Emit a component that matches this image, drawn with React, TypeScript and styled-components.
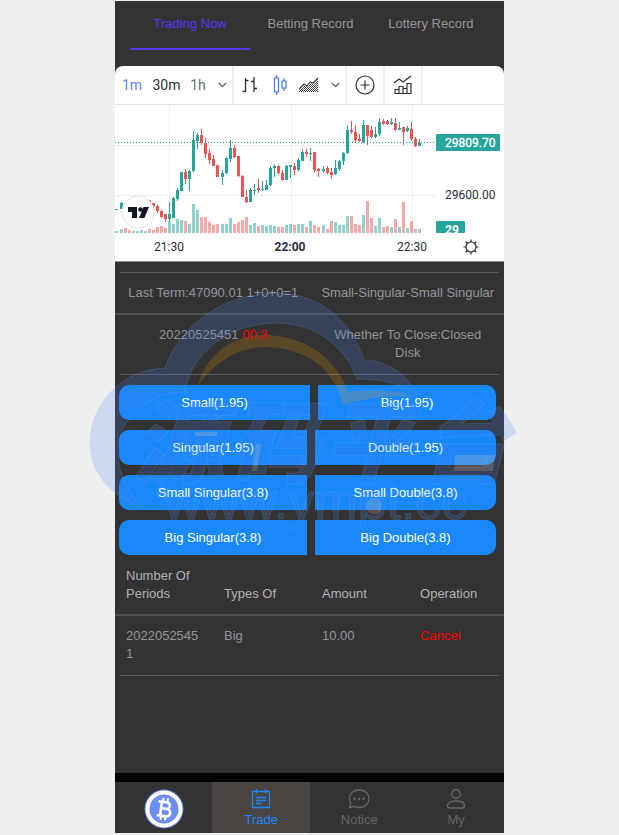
import React from "react";
import styled, { createGlobalStyle } from "styled-components";

const GlobalStyle = createGlobalStyle`
  *, *::before, *::after { box-sizing: border-box; }
  body {
    margin: 0;
    background: #efefef;
    font-family: "Liberation Sans", Arial, sans-serif;
    font-size: 13px;
    line-height: 18px;
  }
  button { font: inherit; border: 0; padding: 0; background: none; cursor: pointer; }
`;

const Shell = styled.div`
  position: relative;
  display: flex;
  flex-direction: column;
  width: 100%;
  max-width: 389px;
  min-height: 100vh;
  margin: 0 auto;
  padding: 1px 0 2px;
`;

const Main = styled.main`
  flex: 1;
  background: #333;
  color: #96939b;
`;

const Tabs = styled.nav`
  display: flex;
  padding: 0 13px 0 15px;
  height: 65px;
`;

const Tab = styled.button<{ $active?: boolean }>`
  flex: 1;
  height: 49px;
  padding-bottom: 2px;
  color: ${(p) => (p.$active ? "#5b35f5" : "#96939b")};
  border-bottom: 2px solid ${(p) => (p.$active ? "#5b35f5" : "transparent")};
`;

const ChartPanel = styled.section`
  position: relative;
  background: #fff;
  border-radius: 8px 8px 0 0;
  border-bottom: 1px solid #8b8f8e;
  overflow: hidden;
  font-family: Roboto, sans-serif;
`;

const Toolbar = styled.div`
  display: flex;
  height: 39px;
  border-bottom: 1px solid #e0e3eb;
`;

const ToolGroup = styled.div`
  display: flex;
  border-right: 2px solid #eceef4;
`;

const Tool = styled.button<{ $width: number; $color?: string }>`
  display: flex;
  align-items: center;
  justify-content: center;
  width: ${(p) => p.$width}px;
  font-size: 14px;
  color: ${(p) => p.$color ?? "#50535e"};
`;

const Plot = styled.svg`
  display: block;
  width: 100%;
  height: auto;
`;

const SettingsButton = styled.button`
  position: absolute;
  right: 24px;
  bottom: 4px;
  width: 18px;
  height: 18px;
  color: #2a2e39;
`;

const Divider = styled.hr`
  height: 2px;
  margin: 0 5px;
  border: 0;
  border-bottom: 1px solid #5b5a61;
`;

const InfoWrap = styled.section`
  padding-top: 9px;
`;

const InfoRow = styled.div<{ $line?: boolean }>`
  display: grid;
  grid-template-columns: 1fr 1fr;
  border-bottom: ${(p) => (p.$line ? "2px solid #4f4e55" : "0")};
`;

const InfoCell = styled.div`
  padding: 11px 9px 11px 11px;
  text-align: center;
`;

const Countdown = styled.span`
  position: relative;
  z-index: 1;
  color: #f00;
`;

const Bets = styled.div`
  display: flex;
  flex-direction: column;
  gap: 10px;
  padding: 10px 8px 10px 4px;
`;

const BetRow = styled.div`
  display: flex;
  gap: 8px;
`;

const BetButton = styled.button<{ $side: "left" | "right"; $share: number }>`
  flex: ${(p) => p.$share} 1 0;
  height: 35px;
  color: #fff;
  background: #1989fa;
  border-radius: ${(p) => (p.$side === "left" ? "10px 0 0 10px" : "0 10px 10px 0")};
`;

const Orders = styled.table`
  width: 100%;
  table-layout: fixed;
  border-collapse: collapse;
`;

const Head = styled.th`
  width: 25.2%;
  padding: 2px 11px 11px;
  text-align: left;
  vertical-align: bottom;
  font-weight: 400;
  color: #b2b2b5;
  border-bottom: 2px solid #4f4e55;

  &:last-child { width: auto; }
`;

const Cell = styled.td`
  padding: 11px;
  vertical-align: top;
  word-break: break-all;
`;

const CancelButton = styled.button`
  color: #f00;
`;

const Footer = styled.nav`
  display: grid;
  grid-template-columns: 25% 25.2% 25.2% 1fr;
  border-top: 9px solid #000;
  background: #333;
`;

const FooterLink = styled.a<{ $active?: boolean }>`
  display: flex;
  flex-direction: column;
  align-items: center;
  justify-content: center;
  gap: 2px;
  height: 51px;
  padding-top: 2px;
  text-decoration: none;
  color: ${(p) => (p.$active ? "#1989fa" : "#66666a")};
  background: ${(p) => (p.$active ? "#4a4443" : "transparent")};
`;

const Watermark = styled.svg`
  position: absolute;
  left: -30px;
  top: 288px;
  width: 440px;
  height: 250px;
  pointer-events: none;
`;

const UP = "#26a69a";
const DOWN = "#ef5350";
const FIRST_SLOT = -13;

// direction, body top, body bottom, wick high, wick low, volume
type Candle = [1 | 0, number, number, number, number, number];
const candles: Candle[] = [
  [1, 209, 210, 209, 210, 2], [1, 203, 209, 202, 209, 4], [0, 203, 205, 202, 206, 5],
  [0, 205, 208, 204, 210, 3], [1, 205, 208, 204, 209, 2], [1, 203, 206, 202, 207, 2],
  [1, 202, 204, 201, 206, 3], [1, 201, 203, 200, 204, 2], [0, 200, 203, 200, 204, 4],
  [0, 203, 206, 203, 208, 3], [0, 206, 211, 205, 213, 6], [0, 211, 217, 210, 218, 7],
  [0, 214, 219, 214, 222, 5], [1, 214, 219, 202, 222, 12], [1, 198, 218, 197, 218, 9],
  [1, 190, 199, 188, 201, 14], [1, 172, 191, 172, 191, 13], [0, 172, 179, 169, 184, 12],
  [1, 171, 179, 170, 191, 9], [1, 140, 171, 131, 172, 29], [1, 135, 141, 133, 149, 23],
  [0, 135, 143, 129, 145, 16], [0, 143, 154, 138, 158, 16], [0, 153, 160, 149, 164, 11],
  [0, 159, 166, 155, 166, 8], [0, 165, 177, 165, 177, 9], [1, 173, 177, 170, 185, 9],
  [1, 158, 173, 157, 174, 9], [1, 148, 159, 140, 162, 15], [0, 148, 157, 145, 158, 9],
  [0, 156, 176, 156, 177, 11], [0, 176, 197, 175, 197, 13], [0, 197, 202, 190, 203, 16],
  [1, 190, 202, 188, 202, 8], [1, 190, 191, 184, 195, 10], [0, 188, 190, 179, 193, 7],
  [1, 189, 190, 181, 191, 8], [1, 185, 190, 180, 190, 7], [1, 168, 185, 166, 186, 8],
  [1, 166, 168, 164, 177, 7], [0, 166, 173, 165, 174, 6], [0, 173, 180, 170, 181, 6],
  [1, 166, 180, 165, 180, 8], [1, 165, 167, 165, 178, 9], [0, 166, 170, 163, 175, 8],
  [1, 160, 170, 158, 171, 9], [1, 152, 161, 149, 161, 9], [0, 152, 154, 149, 157, 6],
  [1, 153, 154, 148, 161, 12], [0, 152, 170, 152, 172, 8], [0, 169, 171, 168, 177, 6],
  [1, 169, 171, 166, 173, 8], [0, 168, 173, 166, 174, 4], [0, 172, 175, 168, 179, 12],
  [1, 168, 174, 160, 175, 11], [1, 161, 169, 160, 171, 8], [1, 153, 161, 152, 165, 8],
  [1, 130, 153, 125, 154, 17], [0, 130, 132, 121, 134, 17], [0, 132, 140, 125, 143, 9],
  [0, 139, 141, 134, 142, 8], [1, 125, 142, 120, 143, 18], [0, 125, 136, 125, 145, 32],
  [0, 130, 137, 126, 138, 15], [1, 134, 137, 127, 138, 7], [1, 122, 134, 118, 136, 15],
  [0, 121, 124, 119, 125, 6], [0, 121, 124, 120, 125, 7], [1, 122, 124, 118, 125, 6],
  [0, 123, 130, 118, 131, 14], [1, 128, 130, 122, 130, 6], [0, 127, 132, 127, 145, 31],
  [1, 128, 131, 126, 132, 5], [0, 129, 139, 122, 141, 12], [0, 139, 146, 137, 147, 4],
  [1, 143, 146, 139, 146, 4],
];

const slotX = (i: number) => Math.round(169 + (FIRST_SLOT + i) * 4.04);

const CandleChart = () => (
  <Plot viewBox="115 105 389 156" role="img" aria-label="Price chart">
    <g stroke="#eeeff2" strokeWidth="1">
      <path d="M115 145.5H436M115 195.5H436M169.5 105V233M291.5 105V233M412.5 105V233" />
    </g>
    {candles.map(([up, top, bottom, high, low, volume], i) => (
      <g key={i} fill={up ? UP : DOWN}>
        <rect x={slotX(i) - 1} y={233 - volume} width="3" height={volume} opacity="0.5" />
        <rect x={slotX(i)} y={high} width="1" height={low - high} />
        <rect x={slotX(i) - 1} y={top} width="3" height={bottom - top} />
      </g>
    ))}
    <path d="M115 142.5H436" stroke={UP} strokeDasharray="1 2" />
    <rect x="436" y="134" width="64" height="17" rx="1" fill={UP} />
    <rect x="436" y="221" width="29" height="12" rx="1" fill={UP} />
    <clipPath id="volumeTag"><rect x="436" y="221" width="40" height="12" /></clipPath>
    <g fontSize="12" fill="#2a2e39">
      <text x="445" y="147" fill="#fff" stroke="#fff" strokeWidth="0.3">29809.70</text>
      <text x="445" y="199">29600.00</text>
      <text x="445" y="234" fill="#fff" fontWeight="700" clipPath="url(#volumeTag)">29</text>
      <text x="169" y="251" textAnchor="middle">21:30</text>
      <text x="290" y="251" textAnchor="middle" fontWeight="700">22:00</text>
      <text x="412" y="251" textAnchor="middle">22:30</text>
    </g>
    <circle cx="138" cy="212" r="16" fill="#fff" stroke="#e2e3e8" />
    <g fill="#131722">
      <path d="M128 207h9v11h-5v-6h-4z" />
      <circle cx="140.500" cy="209.500" r="2.300" />
      <path d="M143.500 207h5.500l-4.600 11h-5.300z" />
    </g>
  </Plot>
);

const Chevron = () => (
  <svg width="9" height="6" viewBox="0 0 9 6" fill="none" stroke="#6a6d78" strokeWidth="1.4">
    <path d="M.7 1l3.800 3.500L8.300 1" />
  </svg>
);

const BarsIcon = () => (
  <svg width="16" height="18" viewBox="0 0 16 18" fill="none" stroke="#2a2e39" strokeWidth="1.300">
    <path d="M3.500 2v14M.5 15.500h3M3.500 4.500h3M12 1v15M9 5.500h3M12 12.500h3" />
  </svg>
);

const CandlesIcon = () => (
  <svg width="14" height="20" viewBox="0 0 14 20" fill="none" stroke="#3f76f5" strokeWidth="1.200">
    <path d="M3.500 0v3M3.500 17v3M1.500 3h4v14h-4zM11 3v3M11 13v3M9 6h4v7H9z" />
  </svg>
);

const AreaIcon = () => (
  <svg width="20" height="16" viewBox="0 0 20 16" fill="none" stroke="#40434e">
    <defs>
      <pattern id="dots" width="2" height="2" patternUnits="userSpaceOnUse">
        <path d="M0 0h1v1H0zM1 1h1v1H1z" fill="#40434e" stroke="none" />
      </pattern>
    </defs>
    <path d="M0 13l5-5 3 2 3-4 3 1 5-5v13H0z" fill="url(#dots)" stroke="none" />
    <path d="M0 12l5-5 3 2 3-4 3 1 5-5" strokeWidth="1.100" />
  </svg>
);

const PlusIcon = () => (
  <svg width="20" height="20" viewBox="0 0 20 20" fill="none" stroke="#2a2e39" strokeWidth="1.200">
    <circle cx="10" cy="10" r="9" />
    <path d="M10 5.500v9M5.500 10h9" />
  </svg>
);

const IndicatorsIcon = () => (
  <svg width="20" height="20" viewBox="0 0 20 20" fill="none" stroke="#2a2e39" strokeWidth="1.200">
    <path d="M1 8l5-4 4 3 8-6" />
    <path d="M2 18.500v-4h4v4M6 18.500v-7h4v7M10 18.500v-5h4v5M14 18.500V8.500h4v10M1.400 18.500h17" />
  </svg>
);

const GearIcon = () => (
  <svg width="16" height="16" viewBox="0 0 16 16" fill="none" stroke="currentColor" strokeWidth="1.200">
    <circle cx="8" cy="8" r="5" />
    <path d="M8 3V.5M8 13v2.500M3 8H.5M13 8h2.500M4.500 4.500L2.700 2.700M11.500 4.500l1.800-1.800M4.500 11.500l-1.800 1.800M11.500 11.500l1.800 1.800" />
  </svg>
);

const CoinIcon = () => (
  <svg width="40" height="40" viewBox="0 0 40 40" fill="none">
    <circle cx="20" cy="20" r="19.500" fill="#7188e6" />
    <circle cx="20" cy="20" r="18.500" fill="#fff" />
    <circle cx="20" cy="20" r="14.500" fill="#6b8ff5" />
    <g transform="rotate(8 20 20)" stroke="#fff" strokeWidth="2.600">
      <path d="M13.500 13h8.500a3.300 3.300 0 0 1 0 6.600h-5h6a3.700 3.700 0 0 1 0 7.400h-9.500M17 13v14" />
      <path d="M18 9v4M22.500 9v4M18 27v4M22.500 27v4" strokeWidth="2" />
    </g>
  </svg>
);

const TradeIcon = () => (
  <svg width="20" height="20" viewBox="0 0 20 20" fill="none" stroke="currentColor" strokeWidth="1.300">
    <path d="M1.500 2.500h17v16h-17zM5.500 0v4.500M14.500 0v4.500M5 8.500h10M5 11.500h10M5 14.500h5" />
  </svg>
);

const NoticeIcon = () => (
  <svg width="22" height="20" viewBox="0 0 22 20" fill="none" stroke="currentColor" strokeWidth="1.300">
    <path d="M1.500 18.500l1.300-4.500C-.8 7.500 4 1 11 1s10 4.300 10 8.700-3.500 8.800-10 8.800c-2 0-3.500-.5-4.700-1.200z" />
    <g fill="currentColor" stroke="none">
      <circle cx="6.500" cy="9.800" r="1.200" /><circle cx="11" cy="9.800" r="1.200" /><circle cx="15.500" cy="9.800" r="1.200" />
    </g>
  </svg>
);

const PersonIcon = () => (
  <svg width="20" height="20" viewBox="0 0 20 20" fill="none" stroke="currentColor" strokeWidth="1.400">
    <circle cx="10" cy="5" r="4.300" />
    <path d="M1.500 16.500c0-3 4-4.500 8.500-4.500s8.500 1.500 8.500 4.500c0 2-1 2.500-2.500 2.500H4c-1.500 0-2.500-.5-2.500-2.500z" />
  </svg>
);

const CloudMark = () => (
  <Watermark viewBox="85 288 440 250" aria-hidden="true">
    <g fill="#4182f5" fillOpacity="0.2" stroke="#9dbcf0" strokeOpacity="0.15">
      <path d="M165 368C181 322 227 293 277 293C319 293 352 321 364 360C386 360 409 375 417 395C400 382 378 379 357 379C344 344 314 323 275 323C226 324 191 354 185 392C150 392 118 416 118 453C119 476 128 493 143 508C112 497 90 474 90 443C90 402 124 369 165 368Z" />
      <text x="133 229 324 420" y="476" fontFamily="'Noto Sans CJK SC', sans-serif" fontSize="90" fontWeight="900" fontStyle="italic">源码平台</text>
      <text x="164" y="519" fontFamily="'Liberation Sans', sans-serif" fontSize="52">www.ympt.cc</text>
    </g>
    <g fill="#fa9b00" fillOpacity="0.2">
      <path d="M198 385C207 354 233 335 263 335C305 335 337 359 348 392C374 389 399 391 417 397C390 394 366 398 343 405C335 370 307 347 263 347C237 348 215 363 198 385Z" />
    </g>
    <g fill="#fac896" fillOpacity="0.2">
      <path d="M195 432h22v4h-22zM256 444h5l-4 27h-5zM455 455h40l-2 16h-39z" />
      <circle cx="374" cy="506" r="8" />
    </g>
  </Watermark>
);

const bets = [
  { left: "Small(1.95)", right: "Big(1.95)", shares: [191, 178] },
  { left: "Singular(1.95)", right: "Double(1.95)", shares: [188, 181] },
  { left: "Small Singular(3.8)", right: "Small Double(3.8)", shares: [188, 181] },
  { left: "Big Singular(3.8)", right: "Big Double(3.8)", shares: [188, 181] },
];

export default function App() {
  return (
    <>
      <GlobalStyle />
      <Shell>
        <Main>
          <Tabs>
            <Tab $active>Trading Now</Tab>
            <Tab>Betting Record</Tab>
            <Tab>Lottery Record</Tab>
          </Tabs>
          <ChartPanel>
            <Toolbar>
              <ToolGroup>
                <Tool $width={34} $color="#6583fb">1m</Tool>
                <Tool $width={35} $color="#2a2e39">30m</Tool>
                <Tool $width={28} $color="#6a6d78">1h</Tool>
                <Tool $width={20} aria-label="More intervals"><Chevron /></Tool>
              </ToolGroup>
              <ToolGroup>
                <Tool $width={32} aria-label="Bars"><BarsIcon /></Tool>
                <Tool $width={27} aria-label="Candles"><CandlesIcon /></Tool>
                <Tool $width={32} aria-label="Area"><AreaIcon /></Tool>
                <Tool $width={20} aria-label="More styles"><Chevron /></Tool>
              </ToolGroup>
              <ToolGroup><Tool $width={36} aria-label="Compare"><PlusIcon /></Tool></ToolGroup>
              <ToolGroup><Tool $width={36} aria-label="Indicators"><IndicatorsIcon /></Tool></ToolGroup>
            </Toolbar>
            <CandleChart />
            <SettingsButton aria-label="Chart settings"><GearIcon /></SettingsButton>
          </ChartPanel>
          <InfoWrap>
            <Divider />
            <InfoRow $line>
              <InfoCell>Last Term:47090.01 1+0+0=1</InfoCell>
              <InfoCell>Small-Singular-Small Singular</InfoCell>
            </InfoRow>
            <InfoRow>
              <InfoCell>20220525451 <Countdown>00:3</Countdown></InfoCell>
              <InfoCell>Whether To Close:Closed Disk</InfoCell>
            </InfoRow>
            <Divider />
          </InfoWrap>
          <Bets>
            {bets.map((b) => (
              <BetRow key={b.left}>
                <BetButton $side="left" $share={b.shares[0]}>{b.left}</BetButton>
                <BetButton $side="right" $share={b.shares[1]}>{b.right}</BetButton>
              </BetRow>
            ))}
          </Bets>
          <Orders>
            <thead>
              <tr>
                <Head>Number Of Periods</Head>
                <Head>Types Of</Head>
                <Head>Amount</Head>
                <Head>Operation</Head>
              </tr>
            </thead>
            <tbody>
              <tr>
                <Cell>20220525451</Cell>
                <Cell>Big</Cell>
                <Cell>10.00</Cell>
                <Cell><CancelButton>Cancel</CancelButton></Cell>
              </tr>
            </tbody>
          </Orders>
          <Divider />
        </Main>
        <Footer>
          <FooterLink href="#home" aria-label="Home"><CoinIcon /></FooterLink>
          <FooterLink href="#trade" $active><TradeIcon />Trade</FooterLink>
          <FooterLink href="#notice"><NoticeIcon />Notice</FooterLink>
          <FooterLink href="#my"><PersonIcon />My</FooterLink>
        </Footer>
        <CloudMark />
      </Shell>
    </>
  );
}
